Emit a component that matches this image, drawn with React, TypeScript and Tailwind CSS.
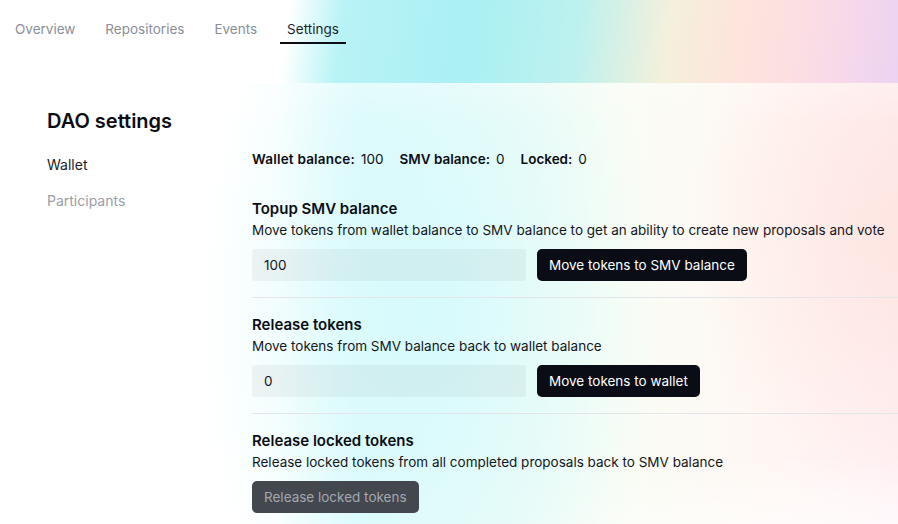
import React from "react"

const tabs = ["Overview", "Repositories", "Events", "Settings"]

type SectionProps = {
    title: string
    description: string
    bordered?: boolean
    children: React.ReactNode
}

const Section: React.FC<SectionProps> = ({ title, description, bordered = false, children }) => {
    return (
        <section className={`pt-4 pb-4 ${bordered ? "border-t border-[#e3e5e8]" : ""}`}>
            <h3 className="text-[15px] leading-[22px] font-semibold text-[#0b0d14]">{title}</h3>
            <p className="text-[13.5px] leading-5 text-[#14161d]">{description}</p>
            <div className="mt-[9px] flex items-center gap-[11px]">{children}</div>
        </section>
    )
}

const AmountInput: React.FC<{ value: string }> = ({ value }) => (
    <input
        defaultValue={value}
        className="h-8 w-[274px] rounded-[3px] bg-[#4a4a4a]/[0.06] pl-3 text-[13.5px] text-[#14161d] outline-none"
    />
)

const DarkButton: React.FC<{ label: string }> = ({ label }) => (
    <button className="h-8 rounded-[5px] bg-[#0a0d15] px-3 text-[13.5px] text-white">{label}</button>
)

export default function App() {
    return (
        <div className="min-h-screen bg-white font-['Inter',sans-serif] text-[#0b0d14]">
            <header className="h-[83px] bg-[linear-gradient(97deg,#ffffff_32%,#b8f3f6_38%,#aaf0f4_52%,#bdf1ee_64%,#f4f0dc_74%,#fde5dc_81%,#fcdfe2_88%,#f6d8ea_94%,#ecd3f2_100%)] pl-2 pt-[19px]">
                <nav className="flex gap-4">
                    {tabs.map((tab) => (
                        <a
                            key={tab}
                            href="#"
                            className={`px-[7px] pb-[3px] text-[13.5px] leading-5 border-b-2 ${
                                tab === "Settings"
                                    ? "border-[#0b0d14] text-[#1c1f2b]"
                                    : "border-transparent text-[#8a8f98]"
                            }`}
                        >
                            {tab}
                        </a>
                    ))}
                </nav>
            </header>

            <main className="min-h-[441px] bg-[radial-gradient(ellipse_380px_170px_at_820px_540px,#ffffff_30%,rgba(255,255,255,0)_100%),linear-gradient(to_bottom,rgba(255,255,255,0.2),rgba(255,255,255,0)_40px),radial-gradient(ellipse_230px_420px_at_430px_230px,rgba(214,250,252,0.95),rgba(214,250,252,0)_100%),radial-gradient(ellipse_230px_280px_at_920px_150px,rgba(253,226,220,0.85),rgba(253,226,220,0)_100%),linear-gradient(to_right,#ffffff_31%,#e2fbfc_40%,#f9fdf5_68%,#fff7f3_85%,#fff1f5_100%)] bg-no-repeat pl-[47px] pt-6">
                <h1 className="text-[20px] leading-7 font-semibold">DAO settings</h1>
                <div className="mt-3 flex">
                    <aside className="w-[205px] shrink-0 text-[14px] leading-5">
                        <div className="py-2 text-[#1b1e27]">Wallet</div>
                        <div className="py-2 text-[#9a9ea6]">Participants</div>
                    </aside>

                    <div className="flex-1">
                        <div className="mt-[2px] mb-[13px] flex gap-4 text-[13.5px] leading-5">
                            <span>
                                <span className="font-semibold tracking-[0.2px]">Wallet balance:</span>
                                <span className="ml-1.5">100</span>
                            </span>
                            <span>
                                <span className="font-semibold">SMV balance:</span>
                                <span className="ml-1.5">0</span>
                            </span>
                            <span>
                                <span className="font-semibold">Locked:</span>
                                <span className="ml-1.5">0</span>
                            </span>
                        </div>

                        <Section
                            title="Topup SMV balance"
                            description="Move tokens from wallet balance to SMV balance to get an ability to create new proposals and vote"
                        >
                            <AmountInput value="100" />
                            <DarkButton label="Move tokens to SMV balance" />
                        </Section>

                        <Section
                            bordered
                            title="Release tokens"
                            description="Move tokens from SMV balance back to wallet balance"
                        >
                            <AmountInput value="0" />
                            <DarkButton label="Move tokens to wallet" />
                        </Section>

                        <Section
                            bordered
                            title="Release locked tokens"
                            description="Release locked tokens from all completed proposals back to SMV balance"
                        >
                            <button className="h-8 rounded-[5px] bg-[#43474e] px-3 text-[13.5px] text-[#a3a7ae]">
                                Release locked tokens
                            </button>
                        </Section>
                    </div>
                </div>
            </main>
        </div>
    )
}
